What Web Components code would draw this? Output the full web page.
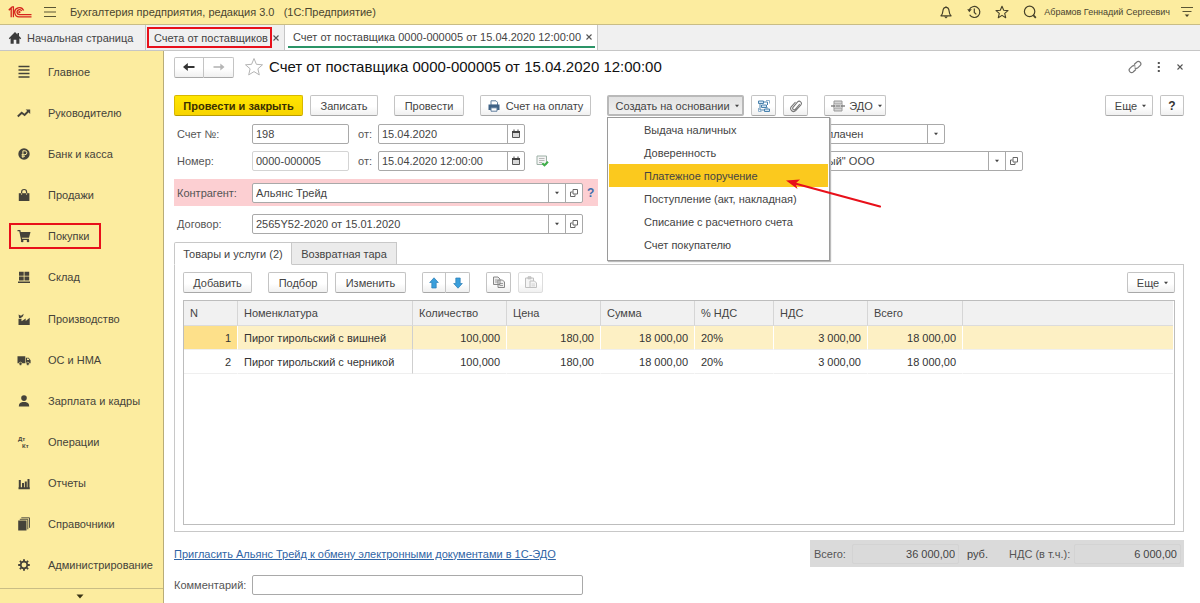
<!DOCTYPE html>
<html lang="ru">
<head>
<meta charset="utf-8">
<meta name="viewport" content="width=device-width, initial-scale=1">
<title>Бухгалтерия предприятия, редакция 3.0</title>
<style>
  html, body { margin: 0; padding: 0; }
  body { font: 11px/14px "Liberation Sans", Arial, sans-serif; color: #444; background: #fff; }
</style>
</head>
<body>
<app-shell></app-shell>

<script>
const ICONS = {
  logo: [24, 12, '<g fill="none" stroke="#d5231c" stroke-width="1.3"><path d="M.8 4.3 3.2 2v9.2M5.4 11.2V.8H4.2L1 3.8"/><path d="M15.6 4.6A4.6 4.6 0 1 0 11.8 10.9H23.5"/><path d="M13.7 4.9A2.5 2.5 0 1 0 11.7 8.7H23.5"/><circle cx="11.4" cy="6.2" r=".5"/></g>'],
  burger: [12, 12, '<path d="M0 1.5h12M0 6h12M0 10.5h12" stroke="#5a5534" stroke-width="1.2"/>'],
  bell: [14, 14, '<path d="M7 1.2v1M2 10.8c1.4-1.3 1.7-2.500 1.900-4.800C4.100 3.600 5.200 2.300 7 2.300S9.900 3.600 10.100 6c.2 2.300.5 3.500 1.900 4.800z" fill="none" stroke="#46412a" stroke-width="1.200" stroke-linejoin="round"/><path d="M5 11.500h4L7 13.400z" fill="#46412a"/>'],
  history: [14, 14, '<g fill="none" stroke="#46412a" stroke-width="1.200"><path d="M2.200 5A5.500 5.500 0 1 1 2.600 9.800M7.300 3.600V7.400l2 2"/></g><path d="M.2 4.300h4.600L2.300 7.300z" fill="#46412a"/>'],
  star: [14, 14, '<path d="M7 1.200 8.700 5.300l4.300.300-3.300 2.800 1 4.300L7 10.400l-3.700 2.300 1-4.300L1 5.600l4.300-.3z" fill="none" stroke="#46412a" stroke-width="1.100" stroke-linejoin="round"/>'],
  search: [14, 14, '<circle cx="6.600" cy="6.400" r="5.200" fill="none" stroke="#46412a" stroke-width="1.200"/><path d="M10.300 10.200 12.800 12.800" stroke="#46412a" stroke-width="1.800"/>'],
  panelmenu: [12, 12, '<path d="M0 1.500h12M1.500 5.500h9" stroke="#5a5534" stroke-width="1.200"/><path d="M3.700 8.500h4.600L6 11z" fill="#46412a"/>'],
  home: [14, 14, '<path d="M7 1 .8 7.300l.9.9L2.600 7.300V12.800H5.700V8.800H8.300v4H11.400V7.300l.9.900.9-.9L11 5V2H9.500v1.500z" fill="#3c3c3c"/>'],
  x: [8, 8, '<path d="M1.500 1.500l5 5M6.500 1.500l-5 5" stroke="#555" stroke-width="1.100"/>'],
  list: [14, 14, '<path d="M1.500 1.500h11M1.500 5h11M1.500 8.500h11M1.500 12h11" stroke="#45433a" stroke-width="1.700"/>'],
  trend: [14, 14, '<path d="M.8 10.500 4.700 6.800 7.600 8.900 11.500 5" fill="none" stroke="#45433a" stroke-width="1.900"/><path d="M8.700 3.600h4.500v4.500z" fill="#45433a"/>'],
  ruble: [14, 14, '<circle cx="7" cy="7" r="5.700" fill="#45433a"/><path d="M5.900 11V3.800h2a1.900 1.900 0 0 1 0 3.900H4.600M4.600 9.200H8" fill="none" stroke="#fcec9f" stroke-width="1"/>'],
  bag: [14, 14, '<path d="M1.800 5.200h10.600V13H1.800z" fill="#45433a"/><path d="M4.600 7V4a2.500 2.500 0 0 1 5 0V7" fill="none" stroke="#45433a" stroke-width="1.200"/><path d="M4.600 5.300v1.500M9.600 5.300v1.500" stroke="#fcec9f" stroke-width=".8"/>'],
  cart: [14, 14, '<path d="M.5 1.700h2.300L4.600 10.300H12" fill="none" stroke="#45433a" stroke-width="1.300"/><path d="M3 3h10.500L12 8.800H4.200z" fill="#45433a"/><circle cx="5.200" cy="12" r="1.300" fill="#45433a"/><circle cx="11" cy="12" r="1.300" fill="#45433a"/>'],
  store: [14, 14, '<path d="M2 1.800h4.700v4H2zM7.500 1.800h4.700v4H7.500zM2 6.600h4.700v4H2zM7.500 6.600h4.700v4H7.500zM1 11.500h12v1.500H1z" fill="#45433a"/>'],
  factory: [14, 14, '<path d="M1.500 13V6.800l3 0v2.400L8.700 6.500v2.400L12.700 5.800V13z" fill="#45433a"/><path d="M2 5.900 1.600 2.500 4 3.700 6.700 1.800 6 4.300 3.800 5.900z" fill="#45433a"/>'],
  truck: [14, 14, '<path d="M.5 3.200h7.800v7H.5zM8.900 4.700h2.800L13.600 7.300v2.900H8.900z" fill="#45433a"/><path d="M10 5.600h1.400l.9 1.500H10z" fill="#fcec9f"/><circle cx="3.500" cy="10.800" r="1.600" fill="#45433a" stroke="#fcec9f" stroke-width=".6"/><circle cx="10.800" cy="10.800" r="1.600" fill="#45433a" stroke="#fcec9f" stroke-width=".6"/>'],
  person: [14, 14, '<circle cx="7" cy="4.100" r="2.800" fill="#45433a"/><path d="M1.800 12.500c0-3 1.500-4 3.700-4.400h3c2.200.4 3.700 1.400 3.700 4.400z" fill="#45433a"/>'],
  dtkt: [14, 14, '<g fill="#45433a" font-family="Liberation Sans" font-weight="bold" font-size="6"><text x="1" y="6">Дт</text><text x="5" y="13">Кт</text></g>'],
  chart: [14, 14, '<path d="M1.500 12.200h11.300M2.800 4v8M6 7v5M8.800 5.600v6.400M11.500 3v9" stroke="#45433a" stroke-width="2" fill="none"/>'],
  books: [14, 14, '<path d="M1.200 3.500h8.300V13.500H1.200z" fill="#45433a"/><path d="M2.800 2.300h8v10M4.300.8h8.200v10" fill="none" stroke="#45433a" stroke-width=".9"/>'],
  gear: [14, 14, '<circle cx="7" cy="7" r="3.300" fill="none" stroke="#45433a" stroke-width="1.700"/><g stroke="#45433a" stroke-width="1.900"><path d="M7 1.200v2M7 10.800v2M1.200 7h2M10.800 7h2M2.900 2.900l1.400 1.400M9.700 9.700l1.400 1.400M2.900 11.100l1.400-1.400M9.700 4.300l1.400-1.400"/></g>'],
  down: [8, 5, '<path d="M.5.500h7L4 4.500z" fill="#3a3516"/>'],
  back: [14, 10, '<path d="M2.500 5H12.500" stroke="#333" stroke-width="2"/><path d="M1 5 5.800 1v8z" fill="#333"/>'],
  fwd: [14, 10, '<path d="M1.500 5H11" stroke="#b5b5b5" stroke-width="1.600"/><path d="M12.500 5 8.300 1.500v7z" fill="#b5b5b5"/>'],
  fav: [20, 20, '<path d="M10 1.500 12.400 7.300l6.100.5-4.600 4 1.400 6.100L10 14.600l-5.300 3.300 1.400-6.100-4.600-4 6.100-.5z" fill="#fff" stroke="#b4b4b4" stroke-width="1"/>'],
  link: [14, 14, '<g fill="none" stroke="#777" stroke-width="1.200" stroke-linecap="round"><path d="M6.400 4.300 8.600 2.200a2.400 2.400 0 0 1 3.500 3.400L10 7.700a2.400 2.400 0 0 1-3 .3M7.600 9.700 5.400 11.800A2.400 2.400 0 0 1 1.900 8.400L4 6.300a2.400 2.400 0 0 1 3-.3"/></g>'],
  dots: [4, 12, '<path d="M.8 1h2v2h-2zM.8 5h2v2h-2zM.8 9h2v2h-2z" fill="#555"/>'],
  print: [12, 12, '<path d="M3 .8h5l1.500 1.500v3H3z" fill="#fff" stroke="#5d7c9c"/><path d="M.5 4.500h11v5.500H.5z" fill="#3f6286"/><path d="M3 7.800h6v3.400H3z" fill="#fff" stroke="#5d7c9c"/>'],
  struct: [14, 14, '<g fill="#cfe3f2" stroke="#4a82ad" stroke-width="1"><path d="M1.500 2h5v2.500h-5zM4.500 6h5v2.500h-5zM7.500 10h5v2.500h-5z"/><path d="M7 3h3.500v3M3 5v6h4M10 8v1.500" fill="none"/><path d="M9 1.500h3.500v3M1.500 9v3.500h3" fill="none" stroke="#8fb2ce"/></g>'],
  clip: [14, 14, '<path d="M10.800 5 6.300 10.300a1.500 1.500 0 0 1-2.300-2L8.600 2.900a2.200 2.200 0 0 1 3.300 2.900L6.700 11.700a3 3 0 0 1-4.500-3.900L6.500 3" fill="none" stroke="#777" stroke-width="1.100"/>'],
  edo: [14, 12, '<path d="M3 1h8v3H3zM3 8h8v3H3z" fill="#d5d5d5" stroke="#999"/><path d="M0 6h4M10 6h4M4.500 6h5" stroke="#888" stroke-width="1.300"/><path d="M2.300 4 4.500 6 2.300 8zM11.700 4 9.500 6l2.200 2z" fill="#888"/>'],
  tri: [6, 4, '<path d="M1 .8h4L3 3.200z" fill="#444"/>'],
  cal: [10, 10, '<path d="M1.500 2.500h7v6h-7z" fill="#d8d8d8" stroke="#555"/><path d="M1 2h8v2H1z" fill="#444"/><path d="M2.500.5h1v1.500h-1zM6.500.5h1v1.500h-1z" fill="#444"/>'],
  open: [8, 8, '<path d="M3 .5h4.500V5H3z" fill="none" stroke="#666"/><path d="M2.500 3H.5V7.500H5V5.500" fill="none" stroke="#666"/>'],
  posted: [13, 12, '<path d="M1 1h9.500v8.500H1z" fill="#f4f4f4" stroke="#9db0a6"/><path d="M3 3.500h5.500M3 5.500h5.500M3 7.500h3" stroke="#aaa" stroke-width=".8"/><path d="M6.300 8.200 8.500 10.300 12 6.800" fill="none" stroke="#3fae49" stroke-width="2"/>'],
  up: [10, 12, '<path d="M5 .8 9.300 5.500H7.200V11H2.800V5.500H.7z" fill="#3a9fdc" stroke="#2a7cb5" stroke-width=".7"/>'],
  dn: [10, 12, '<path d="M5 11.200 9.300 6.500H7.200V1H2.800v5.500H.7z" fill="#3a9fdc" stroke="#2a7cb5" stroke-width=".7"/>'],
  copy: [14, 13, '<g stroke="#888" fill="#eee"><path d="M1.500 1h4.500l2 2v5.500h-6.500zM6 4h4.500l2 2v5.500H6z"/></g><path d="M3 4h3M3 6h3M7.500 7.500h3.500M7.500 9.500h3.500" stroke="#888" stroke-width=".8"/>'],
  paste: [14, 13, '<g stroke="#c0c0c0" fill="#f5f5f5"><path d="M1.500 2h8v9.500h-8z"/><path d="M4 .8h3v2H4z" fill="#ccc"/><path d="M6 5h4.500l2 2v4.500H6z"/></g><path d="M7.500 8h3.500M7.500 9.800h3.500" stroke="#ccc" stroke-width=".8"/>'],
};

const define = (name, html, setup) => {
  const template = document.createElement('template');
  template.innerHTML = html;
  customElements.define(name, class extends HTMLElement {
    connectedCallback() {
      if (this.shadowRoot) return;
      const root = this.attachShadow({ mode: 'open', delegatesFocus: name.startsWith('ui-') });
      root.append(template.content.cloneNode(true));
      if (setup) setup(this, root);
    }
  });
};

define('ui-icon', `<style>:host{display:inline-flex;flex:none}svg{display:block}</style>`, (el, root) => {
  const [w, h, body] = ICONS[el.getAttribute('name')];
  root.innerHTML += `<svg aria-hidden="true" width="${w}" height="${h}" viewBox="0 0 ${w} ${h}">${body}</svg>`;
});

define('ui-button', `<style>
  :host { display: inline-flex; flex: none; }
  :host([square]) { width: 25px; }
  button { font: inherit; color: #444; height: 21px; box-sizing: border-box; margin: 0; width: 100%;
    padding: 0 10px; display: flex; align-items: center; justify-content: center; gap: 6px; white-space: nowrap;
    background: linear-gradient(#fff 55%, #f0f0f0); border: 1px solid #c4c4c4; border-bottom-color: #a8a8a8; border-radius: 2px; }
  :host([kind=primary]) button { font-weight: bold; color: #3a3000; background: linear-gradient(#ffe600, #f8d400); border-color: #d8b800; border-bottom-color: #b89c00; }
  :host([kind=pressed]) button { background: linear-gradient(#e2e2e2, #f1f1f1); border: 2px solid #b9b9b9; }
  :host([kind=strong]) button { font-weight: bold; font-size: 12px; color: #333; }
  :host([square]) button { padding: 0; }
  :host([menu]) button { padding: 0 4px 0 8px; gap: 4px; }
  :host([disabled]) button { border-color: #ddd; }
  :host([join=left]) button { border-radius: 2px 0 0 2px; }
  :host([join=right]) button { border-radius: 0 2px 2px 0; border-left: 0; }
</style><button type="button"><slot></slot></button>`, (el, root) => {
  const b = root.querySelector('button');
  if (el.hasAttribute('menu')) b.insertAdjacentHTML('beforeend', '<ui-icon name="tri"></ui-icon>');
  if (el.hasAttribute('label')) b.setAttribute('aria-label', el.getAttribute('label'));
  if (el.hasAttribute('disabled')) b.disabled = true;
});

/* Field: caption, an input or a select, then trailing buttons. */
define('ui-field', `<style>
  :host { display: flex; align-items: center; }
  label { flex: none; width: var(--label, 78px); box-sizing: border-box; padding-left: var(--label-pad, 3px); color: #555; text-align: left; white-space: nowrap; }
  :host([nolabel]) label { display: none; }
  .box { flex: 1; min-width: 0; height: 20px; box-sizing: border-box; display: flex; background: #fff; border: 1px solid #a9a9a9; border-radius: 2px; }
  :host([soft]) .box { border-color: #d4d4d4; }
  :host([flat]) .box { background: transparent; border-color: #d3d3d3; }
  input, select { font: inherit; color: #444; flex: 1; min-width: 0; width: 0; border: 0; outline: 0; background: transparent;
    margin: 0; padding: 0 3px; appearance: none; text-align: inherit; }
  button, .mark { flex: none; width: 17px; box-sizing: border-box; padding: 0; border: 0; border-left: 1px solid #a9a9a9; background: transparent;
    display: flex; align-items: center; justify-content: center; }
</style><label for="c"></label><div class="box"></div>`, (el, root) => {
  const label = root.querySelector('label'), box = root.querySelector('.box');
  const value = el.getAttribute('value') || '', parts = (el.getAttribute('tools') || '').split(' ');
  label.textContent = el.getAttribute('label');
  let c;
  if (parts.includes('drop')) {
    c = document.createElement('select');
    c.add(new Option(value));
  } else {
    c = document.createElement('input');
    c.type = 'text'; c.value = value;
    if (el.hasAttribute('flat')) c.readOnly = true;
  }
  c.id = 'c';
  if (el.hasAttribute('nolabel')) c.setAttribute('aria-label', el.getAttribute('label'));
  box.append(c);
  if (parts.includes('drop')) box.insertAdjacentHTML('beforeend', '<span class="mark"><ui-icon name="tri"></ui-icon></span>');
  if (parts.includes('open')) box.insertAdjacentHTML('beforeend', '<button type="button" aria-label="Открыть"><ui-icon name="open"></ui-icon></button>');
  if (parts.includes('cal')) box.insertAdjacentHTML('beforeend', '<button type="button" aria-label="Выбрать дату"><ui-icon name="cal"></ui-icon></button>');
});

define('app-header', `<style>
  :host { display: flex; align-items: center; height: 24px; padding: 0 7px 0 8px; background: #fcec9f; border-bottom: 1px solid #c9bd85; color: #4a4530; }
  .title { margin-left: 14px; white-space: pre; flex: 1; }
  .burger { margin-left: 12px; }
  nav { display: flex; align-items: center; gap: 14px; }
  button { border: 0; padding: 0; background: none; display: flex; }
  .user { font-size: 9px; margin: 0 11px 0 7px; }
</style>
<ui-icon name="logo"></ui-icon>
<button class="burger" aria-label="Меню"><ui-icon name="burger"></ui-icon></button>
<span class="title">Бухгалтерия предприятия, редакция 3.0   (1С:Предприятие)</span>
<nav>
  <button aria-label="Уведомления"><ui-icon name="bell"></ui-icon></button>
  <button aria-label="История"><ui-icon name="history"></ui-icon></button>
  <button aria-label="Избранное"><ui-icon name="star"></ui-icon></button>
  <button aria-label="Поиск"><ui-icon name="search"></ui-icon></button>
</nav>
<span class="user">Абрамов Геннадий Сергеевич</span>
<button aria-label="Настройки"><ui-icon name="panelmenu"></ui-icon></button>`);

define('app-tab', `<style>
  :host { display: flex; align-items: stretch; position: relative; box-sizing: border-box; border-right: 1px solid #c6c6c6; padding: 0 8px; }
  :host([active]) { background: #fff; padding: 0 2px 0 3px; }
  a { display: flex; align-items: center; gap: 5px; color: #444; text-decoration: none; white-space: nowrap; }
  button { border: 0; padding: 0; background: none; display: flex; align-items: center; margin-left: 4px; }
  :host([active]) a, :host([active]) button { border-bottom: 2px solid #2b9467; margin: 0 0 2px; padding: 3px 4px 0 5px; }
  :host([active]) button { padding: 3px 2px 0 0; }
  :host([marked])::after { content: ""; position: absolute; inset: 2px 12px 2px 1px; border: 2px solid #e8101a; }
</style><a href="#"><slot></slot></a>`, (el, root) => {
  if (el.hasAttribute('closable')) root.innerHTML += '<button aria-label="Закрыть вкладку"><ui-icon name="x"></ui-icon></button>';
});

define('app-tabs', `<style>
  :host { display: flex; height: 25px; background: #f0f0f0; border-bottom: 1px solid #c6c6c6; }
  .home { width: 146px; }
  .list { width: 139px; padding-right: 2px; }
</style>
<app-tab class="home"><ui-icon name="home"></ui-icon>Начальная страница</app-tab>
<app-tab class="list" closable marked>Счета от поставщиков</app-tab>
<app-tab active closable>Счет от поставщика 0000-000005 от 15.04.2020 12:00:00</app-tab>`);

define('nav-item', `<style>
  :host { display: flex; flex: 1; align-items: center; min-height: 28px; }
  a { display: flex; align-items: center; gap: 17px; padding-left: 17px; color: #45433a; text-decoration: none; white-space: nowrap; }
  :host([marked]) a { border: 2px solid #e8101a; margin-left: 9px; padding: 4px 10px 4px 6px; }
</style><a href="#"><slot></slot></a>`, (el, root) => {
  root.querySelector('a').insertAdjacentHTML('afterbegin', `<ui-icon name="${el.getAttribute('icon')}"></ui-icon>`);
});

define('app-sidebar', `<style>
  :host { display: flex; flex-direction: column; flex: none; width: 164px; box-sizing: border-box; background: #fcec9f; border-right: 1px solid #b9ad78; }
  nav { flex: 1; display: flex; flex-direction: column; padding-bottom: 2px; }
  button { flex: none; height: 15px; border: 0; border-top: 1px solid #c9bd85; background: none; padding: 0 4px 0 0; display: flex; align-items: center; justify-content: center; }
</style>
<nav>
  <nav-item icon="list">Главное</nav-item>
  <nav-item icon="trend">Руководителю</nav-item>
  <nav-item icon="ruble">Банк и касса</nav-item>
  <nav-item icon="bag">Продажи</nav-item>
  <nav-item icon="cart" marked>Покупки</nav-item>
  <nav-item icon="store">Склад</nav-item>
  <nav-item icon="factory">Производство</nav-item>
  <nav-item icon="truck">ОС и НМА</nav-item>
  <nav-item icon="person">Зарплата и кадры</nav-item>
  <nav-item icon="dtkt">Операции</nav-item>
  <nav-item icon="chart">Отчеты</nav-item>
  <nav-item icon="books">Справочники</nav-item>
  <nav-item icon="gear">Администрирование</nav-item>
</nav>
<button aria-label="Ещё разделы"><ui-icon name="down"></ui-icon></button>`);

define('doc-title', `<style>
  :host { display: flex; align-items: center; height: 20px; }
  .nav { display: flex; }
  .nav ui-button { width: 30px; }
  h1 { font-size: 15px; line-height: 20px; font-weight: normal; color: #111; margin: 0; flex: 1; white-space: nowrap; }
  .fav { margin: 0 5px 0 10px; }
  .tools { display: flex; align-items: center; gap: 15px; }
  button { border: 0; background: none; padding: 0; display: flex; }
</style>
<div class="nav"><ui-button square join="left" label="Назад"><ui-icon name="back"></ui-icon></ui-button><ui-button square join="right" label="Вперед"><ui-icon name="fwd"></ui-icon></ui-button></div>
<button class="fav" aria-label="В избранное"><ui-icon name="fav"></ui-icon></button>
<h1><slot></slot></h1>
<div class="tools">
  <button aria-label="Ссылка"><ui-icon name="link"></ui-icon></button>
  <button aria-label="Действия"><ui-icon name="dots"></ui-icon></button>
  <button aria-label="Закрыть"><ui-icon name="x"></ui-icon></button>
</div>`);

define('create-menu', `<style>
  :host { display: block; position: relative; }
  ui-button { width: 137px; }
  .menu { position: absolute; z-index: 2; top: 22px; left: 0; width: 223px; box-sizing: border-box; margin: 0; padding: 0 1px 4px;
    list-style: none; background: #fff; border: 1px solid #9a9a9a; box-shadow: 1px 1px 1px #bbb; }
  .menu button { font: inherit; color: #444; display: block; width: 100%; height: 23px; padding: 0 0 0 35px; border: 0; background: none; text-align: left; white-space: nowrap; }
  .menu .on { background: #fbc91e; }
  svg { position: absolute; z-index: 3; left: 178px; top: 83px; pointer-events: none; }
</style>
<ui-button kind="pressed" menu>Создать на основании</ui-button>
<ul class="menu">
  <li><button>Выдача наличных</button></li>
  <li><button>Доверенность</button></li>
  <li><button class="on">Платежное поручение</button></li>
  <li><button>Поступление (акт, накладная)</button></li>
  <li><button>Списание с расчетного счета</button></li>
  <li><button>Счет покупателю</button></li>
</ul>
<svg width="98" height="32" viewBox="0 0 98 32" aria-hidden="true"><path d="M10 5.500 95 28.500" stroke="#e8101a" stroke-width="2.200" stroke-linecap="round"/><path d="M1 2.500 15 1.500 10.500 5.500 12.500 11z" fill="#e8101a"/></svg>`);

define('command-bar', `<style>
  :host { display: flex; gap: 7px; align-items: flex-start; }
  .grp { margin-left: 9px; }
  .grow { flex: 1; }
</style>
<ui-button kind="primary" style="width:129px">Провести и закрыть</ui-button>
<ui-button style="width:68px">Записать</ui-button>
<ui-button class="grp" style="width:70px">Провести</ui-button>
<ui-button class="grp" style="width:111px"><ui-icon name="print"></ui-icon>Счет на оплату</ui-button>
<create-menu class="grp"></create-menu>
<ui-button square label="Структура подчиненности"><ui-icon name="struct"></ui-icon></ui-button>
<ui-button square label="Файлы"><ui-icon name="clip"></ui-icon></ui-button>
<ui-button class="grp" menu style="width:62px"><ui-icon name="edo"></ui-icon>ЭДО</ui-button>
<span class="grow"></span>
<ui-button menu style="width:48px">Еще</ui-button>
<ui-button square kind="strong" style="width:24px">?</ui-button>`);

define('doc-fields', `<style>
  :host { display: flex; flex-direction: column; gap: 8px; }
  .head { display: grid; grid-template-columns: 626px 1fr; row-gap: 7px; }
  .pair { display: flex; align-items: center; }
  .num { width: 175px; }
  .date { width: 176px; --label: 29px; --label-pad: 9px; }
  ui-icon { margin-left: 11px; }
  .status { width: 145px; }
  .org { width: 223px; }
  .ref { display: flex; align-items: center; width: 424px; height: 20px; }
  .ref ui-field { width: 409px; }
  .required { background: #fccfd2; height: 27px; }
  a { margin-left: 4px; color: #3f6cab; font-size: 12px; font-weight: bold; text-decoration: none; }
</style>
<div class="head">
  <div class="pair"><ui-field class="num" label="Счет №:" value="198"></ui-field><ui-field class="date" label="от:" value="15.04.2020" tools="cal"></ui-field></div>
  <ui-field class="status" nolabel label="Состояние" value="Не оплачен" tools="drop"></ui-field>
  <div class="pair"><ui-field class="num" soft label="Номер:" value="0000-000005"></ui-field><ui-field class="date" label="от:" value="15.04.2020 12:00:00" tools="cal"></ui-field><ui-icon name="posted"></ui-icon></div>
  <ui-field class="org" nolabel label="Организация" value='"Новый" ООО' tools="drop open"></ui-field>
</div>
<div class="ref required"><ui-field label="Контрагент:" value="Альянс Трейд" tools="drop open"></ui-field><a href="#">?</a></div>
<div class="ref"><ui-field label="Договор:" value="2565Y52-2020 от 15.01.2020" tools="drop open"></ui-field></div>`);

define('items-table', `<style>
  :host { display: block; flex: 1; min-height: 120px; border: 1px solid #bdbdbd; box-sizing: border-box; padding-right: 1px; }
  table { width: 100%; border-collapse: separate; border-spacing: 0; table-layout: fixed; }
  th, td { box-sizing: border-box; padding: 0 6px; font-weight: normal; text-align: left; white-space: nowrap; overflow: hidden; }
  th { height: 25px; background: #f1f1f1; border-right: 1px solid #d6d6d6; border-bottom: 1px solid #dcdcdc; color: #444; }
  td { height: 24px; border-right: 1px solid #fff; border-bottom: 1px solid #efefef; color: #333; }
  td:nth-child(2) { border-right-color: #cfcfcf; }
  td.n { text-align: right; }
  tr.on td { background: #fdf0c4; }
  tr.on td:first-child { background: #fde08a; }
  td:last-child, th:last-child { border-right: 0; }
</style>
<table>
  <colgroup><col style="width:54px"><col style="width:175px"><col style="width:94px"><col style="width:94px"><col style="width:94px"><col style="width:79px"><col style="width:94px"><col style="width:95px"><col></colgroup>
  <thead><tr><th>N</th><th>Номенклатура</th><th>Количество</th><th>Цена</th><th>Сумма</th><th>% НДС</th><th>НДС</th><th>Всего</th><th></th></tr></thead>
  <tbody>
    <tr class="on"><td class="n">1</td><td>Пирог тирольский с вишней</td><td class="n">100,000</td><td class="n">180,00</td><td class="n">18 000,00</td><td>20%</td><td class="n">3 000,00</td><td class="n">18 000,00</td><td></td></tr>
    <tr><td class="n">2</td><td>Пирог тирольский с черникой</td><td class="n">100,000</td><td class="n">180,00</td><td class="n">18 000,00</td><td>20%</td><td class="n">3 000,00</td><td class="n">18 000,00</td><td></td></tr>
  </tbody>
</table>`);

define('items-panel', `<style>
  :host { display: flex; flex-direction: column; flex: 1; }
  .tabs { display: flex; }
  .tabs button { font: inherit; color: #444; height: 22px; padding: 0; border: 1px solid #c8c8c8; background: #ebebeb; white-space: nowrap; }
  .tabs .on { width: 118px; background: #fff; border-bottom-color: #fff; border-radius: 2px 0 0; margin-bottom: -1px; height: 23px; position: relative; }
  .tabs .off { width: 105px; border-left: 0; border-bottom: 0; }
  .panel { flex: 1; display: flex; flex-direction: column; gap: 7px; border: 1px solid #c8c8c8; padding: 7px 8px 6px; }
  .bar { display: flex; gap: 7px; }
  .grp { margin-left: 9px; }
  .grow { flex: 1; }
  .pair { display: flex; }
  .pair ui-button { width: 24px; }
</style>
<div class="tabs" role="tablist"><button class="on" role="tab" aria-selected="true">Товары и услуги (2)</button><button class="off" role="tab">Возвратная тара</button></div>
<div class="panel">
  <div class="bar">
    <ui-button style="width:69px">Добавить</ui-button>
    <ui-button class="grp" style="width:60px">Подбор</ui-button>
    <ui-button style="width:71px">Изменить</ui-button>
    <div class="pair grp"><ui-button square join="left" label="Вверх"><ui-icon name="up"></ui-icon></ui-button><ui-button square join="right" label="Вниз"><ui-icon name="dn"></ui-icon></ui-button></div>
    <ui-button class="grp" square label="Копировать"><ui-icon name="copy"></ui-icon></ui-button>
    <ui-button square disabled label="Вставить"><ui-icon name="paste"></ui-icon></ui-button>
    <span class="grow"></span>
    <ui-button menu style="width:48px">Еще</ui-button>
  </div>
  <items-table></items-table>
</div>`);

define('doc-footer', `<style>
  :host { display: flex; flex-direction: column; gap: 8px; }
  .row { display: flex; align-items: center; justify-content: space-between; }
  a { color: #2f64a5; }
  .totals { display: flex; align-items: center; width: 374px; height: 27px; box-sizing: border-box; padding: 0 3px 0 2px; background: #dadada; text-align: right; }
  .sum { width: 147px; --label: 40px; }
  .vat { width: 174px; --label: 67px; }
  .totals ui-field { --label-pad: 2px; }
  .cur { margin: 0 auto 0 8px; }
  .comment { width: 409px; --label-pad: 0; }
</style>
<div class="row">
  <a href="#">Пригласить Альянс Трейд к обмену электронными документами в 1С-ЭДО</a>
  <div class="totals"><ui-field class="sum" flat label="Всего:" value="36 000,00"></ui-field><span class="cur">руб.</span><ui-field class="vat" flat label="НДС (в т.ч.):" value="6 000,00"></ui-field></div>
</div>
<ui-field class="comment" label="Комментарий:"></ui-field>`);

define('app-shell', `<style>
  :host { display: flex; flex-direction: column; min-height: 100vh; }
  .body { flex: 1; display: flex; }
  main { flex: 1; min-width: 0; display: flex; flex-direction: column; gap: 8px; padding: 6px 16px 8px 10px; }
  command-bar { margin-top: 10px; }
</style>
<app-header></app-header>
<app-tabs></app-tabs>
<div class="body">
  <app-sidebar></app-sidebar>
  <main>
    <doc-title>Счет от поставщика 0000-000005 от 15.04.2020 12:00:00</doc-title>
    <command-bar></command-bar>
    <doc-fields></doc-fields>
    <items-panel></items-panel>
    <doc-footer></doc-footer>
  </main>
</div>`);
</script>
</body>
</html>
